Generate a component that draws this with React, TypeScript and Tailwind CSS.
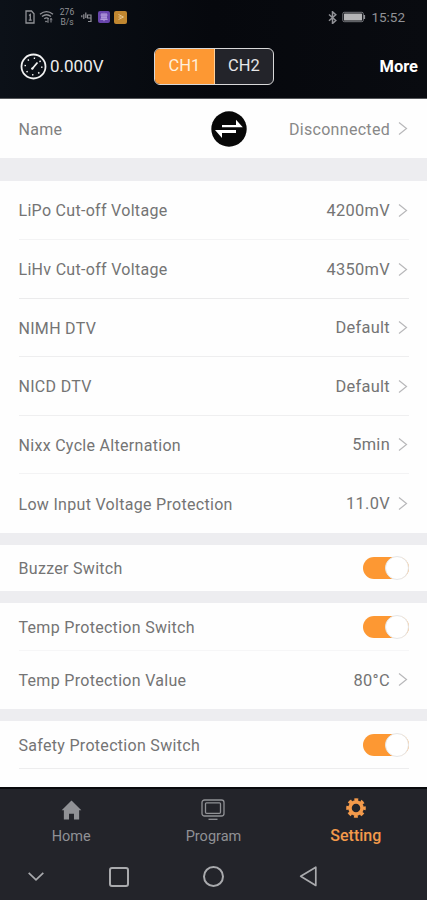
import type { ReactNode } from 'react';
import clsx from 'clsx';

type Setting = {
  label: string;
  value?: string;
  height: string;
  divider?: string;
};

const VOLTAGE_SETTINGS: Setting[] = [
  { label: 'LiPo Cut-off Voltage', value: '4200mV', height: 'h-[59px]', divider: 'bg-[#f3f3f4]' },
  { label: 'LiHv Cut-off Voltage', value: '4350mV', height: 'h-[59px]', divider: 'bg-[#ebebec]' },
  { label: 'NIMH DTV', value: 'Default', height: 'h-[58px]', divider: 'bg-[#eeeeef]' },
  { label: 'NICD DTV', value: 'Default', height: 'h-[59px]', divider: 'bg-[#efeff0]' },
  { label: 'Nixx Cycle Alternation', value: '5min', height: 'h-[58px]', divider: 'bg-[#f3f3f4]' },
  { label: 'Low Input Voltage Protection', value: '11.0V', height: 'h-[59px]' },
];

const BUZZER_SETTINGS: Setting[] = [{ label: 'Buzzer Switch', height: 'h-[46px]' }];

const TEMP_SETTINGS: Setting[] = [
  { label: 'Temp Protection Switch', height: 'h-12', divider: 'bg-[#f6f6f7]' },
  { label: 'Temp Protection Value', value: '80°C', height: 'h-[58px]' },
];

const SAFETY_SETTINGS: Setting[] = [
  { label: 'Safety Protection Switch', height: 'h-12', divider: 'bg-[#ededee]' },
];

function Chevron() {
  return (
    <svg className="mr-px mb-0.5 ml-2 h-[15px] w-2.5 shrink-0" viewBox="0 0 10 15" fill="none" stroke="#b8b8ba" strokeWidth="1.2">
      <path d="M1 1.5 8.5 7.5 1 13.5" />
    </svg>
  );
}

function Toggle() {
  return (
    <div className="relative mb-0.5 h-[22px] w-[46px] rounded-full bg-[#fd9833]">
      <div className="absolute -top-px right-0 size-6 rounded-full border border-[#e6e6e6] bg-white" />
    </div>
  );
}

function SettingRow({ label, value, height, divider }: Setting) {
  return (
    <div className={clsx('flex flex-col pr-[18px] pl-[18.5px]', height)}>
      <div className={clsx('flex flex-1 items-center justify-between', divider ? 'pt-[3px]' : 'pt-0.5')}>
        <span>{label}</span>
        {value ? (
          <span className="flex items-center text-[16.4px]">
            {value}
            <Chevron />
          </span>
        ) : (
          <Toggle />
        )}
      </div>
      {divider && <div className={clsx('h-[1.5px]', divider)} />}
    </div>
  );
}

function Group({ settings, className }: { settings: Setting[]; className?: string }) {
  return (
    <section className={clsx('bg-[#fefefe]', className)}>
      {settings.map((setting) => (
        <SettingRow key={setting.label} {...setting} />
      ))}
    </section>
  );
}

function StatusBar() {
  return (
    <div className="flex h-[34px] items-center justify-between pr-[22px] pl-[25px] text-[#919297]">
      <div className="flex items-center">
        <svg className="h-3.5 w-2.5" viewBox="0 0 10 14" fill="none" stroke="currentColor" strokeWidth="1.3">
          <path d="M1 1h5.5L9 3.8V13H1z M4 5.5l1.3-1V10 M3.7 10.2h3" />
        </svg>
        <svg className="ml-1 h-3.5 w-[15px]" viewBox="0 0 15 14" fill="none" stroke="currentColor" strokeWidth="1.4">
          <path d="M1 4.2Q7.5-1 14 4.2M3 6.5Q7.5 3 12 6.5M5.3 8.8q2.2-1.8 4.4 0M6.5 11l1 1" />
          <path d="M9 8.5v4m-1.3-1.3L9 12.5M12 12.5v-4m-1.2 1.2L12 8.5l1.3 1.2" strokeWidth="1" />
        </svg>
        <div className="ml-[5px] w-4 text-center text-[8.5px] leading-[10.5px]">
          <div>276</div>
          <div>B/s</div>
        </div>
        <svg className="ml-1.5 h-3 w-[11px]" viewBox="0 0 11 12" fill="none" stroke="currentColor" strokeWidth="1.2">
          <path d="M.8 6.2v-2M2.8 8V3.2M4.8 7V1.5M6.5 7.5V4h3.5v6.5H7M7 7h3" />
        </svg>
        <div className="ml-1.5 flex size-3 items-center justify-center rounded-[2px] bg-[#6845ac]">
          <svg className="size-2.5" viewBox="0 0 10 10" fill="none" stroke="#b9a3df">
            <path d="M5 .8v8.4M1.5 3h7M2 5.2h6M1.3 7.3h7.4M3 1v7M7 1v7" />
          </svg>
        </div>
        <div className="ml-1 flex size-[13px] items-center justify-center rounded-[2px] bg-[#c18730]">
          <svg className="size-2" viewBox="0 0 8 8" fill="none" stroke="#e6c48d">
            <path d="M1.5 1.5 6.5 4l-5 2.5M1.5 4h3" />
          </svg>
        </div>
      </div>
      <div className="flex items-center">
        <svg className="h-[13px] w-[9px]" viewBox="0 0 9 13" fill="none" stroke="currentColor" strokeWidth="1.5">
          <path d="m1 3.5 6.8 6-3.3 3V.8l3.3 3L1 9.8" />
        </svg>
        <svg className="mr-[5px] ml-[5px] h-3 w-6" viewBox="0 0 24 12">
          <rect x=".8" y="1.3" width="20.5" height="9.4" rx="1.5" fill="none" stroke="currentColor" strokeWidth=".8" />
          <rect x="2" y="2.4" width="18" height="7.2" rx=".5" fill="#b5b5b7" />
          <path d="M22.3 4v4" stroke="currentColor" strokeWidth="1.6" />
        </svg>
        <span className="text-[13.5px]">15:52</span>
      </div>
    </div>
  );
}

function GaugeIcon() {
  return (
    <svg className="mb-px size-[27px]" viewBox="0 0 27 27" fill="none" stroke="#f1f1f1">
      <circle cx="13.5" cy="13.5" r="12" strokeWidth="1.8" />
      <circle cx="13.5" cy="13.5" r="8.3" strokeWidth="1.5" strokeDasharray="1.4 5.12" />
      <path d="m12 16 5.5-6.5" strokeWidth="1.8" />
      <circle cx="12.3" cy="15.6" r="1.2" fill="#f1f1f1" stroke="none" />
    </svg>
  );
}

function Header() {
  return (
    <header className="h-[99px] border-b border-[#55575a] bg-linear-to-r from-[#0c1118] via-[#06080d] to-[#090b10]">
      <StatusBar />
      <div className="grid h-16 grid-cols-[1fr_120px_1fr] items-center pr-[9px] pl-5">
        <div className="flex items-center gap-[3px] pt-px text-[17px] text-[#ececed]">
          <GaugeIcon />
          0.000V
        </div>
        <div className="-ml-[5px] flex h-[37px] w-[120px] overflow-hidden rounded-md border-[1.5px] border-[#d8d8d9] bg-[#23242a] text-[16.5px] text-[#e6e6e7]">
          <div className="flex w-[60px] items-center justify-center border-r border-[#ffd19b] bg-[#fd9833] pt-px text-[#fff0dc]">
            CH1
          </div>
          <div className="flex flex-1 items-center justify-center pt-px">CH2</div>
        </div>
        <div className="pt-0.5 text-right text-[16.5px] font-bold text-white">More</div>
      </div>
    </header>
  );
}

function TabItem({ icon, label, active }: { icon: ReactNode; label: string; active?: boolean }) {
  return (
    <div
      className={clsx(
        'flex flex-col items-center',
        active ? 'text-[16px] font-medium text-[#f39a4b]' : 'text-[14.5px] text-[#909195]',
      )}
    >
      <div className="flex h-[23px] items-center">{icon}</div>
      <span className={clsx('leading-5', active ? 'mt-1.5' : 'mt-[7px]')}>{label}</span>
    </div>
  );
}

function TabBar() {
  return (
    <nav className="grid h-[66px] grid-cols-3 pt-2">
      <TabItem
        label="Home"
        icon={
          <svg className="mt-[3px] h-5 w-[21px]" viewBox="0 0 22 20" fill="currentColor">
            <path d="m11 0 10.3 10.2H19V20h-5.4v-6.2H8.4V20H3v-9.8H.7z" />
          </svg>
        }
      />
      <TabItem
        label="Program"
        icon={
          <svg className="mt-[3px] h-[22px] w-6" viewBox="0 0 24 22" fill="none" stroke="currentColor" strokeWidth="1.3">
            <rect x="1" y="1" width="22" height="16" rx="2.5" />
            <rect x="4.5" y="3.8" width="15" height="10.5" rx="1" />
            <path d="M7.5 20.3h9" />
          </svg>
        }
      />
      <TabItem
        active
        label="Setting"
        icon={
          <svg className="mb-0.5 size-5" viewBox="0 0 20 20" fill="none" stroke="currentColor">
            <circle cx="10" cy="10" r="6" strokeWidth="3.5" />
            <circle cx="10" cy="10" r="8.4" strokeWidth="2.8" strokeDasharray="3.8 2.797" strokeDashoffset="1.9" />
          </svg>
        }
      />
    </nav>
  );
}

function SystemBar() {
  return (
    <div className="flex flex-1 items-center pb-0.5 pl-[27px] text-[#a9aaad]">
      <svg className="h-[11px] w-[18px]" viewBox="0 0 18 11" fill="none" stroke="currentColor" strokeWidth="1.7">
        <path d="m1.7 1.8 7.3 7 7.3-7" />
      </svg>
      <div className="ml-16 size-5 rounded-[3px] border-2 border-current" />
      <div className="ml-[74px] size-[21px] rounded-full border-2 border-current" />
      <svg className="ml-[75px] h-[21px] w-[18px]" viewBox="0 0 18 21" fill="none" stroke="currentColor" strokeWidth="1.7">
        <path d="M16.8 1.2v18.2L1.7 10.3z" strokeLinejoin="round" />
      </svg>
    </div>
  );
}

export default function App() {
  return (
    <div className="flex h-[900px] w-[427px] flex-col overflow-hidden bg-[#ededf0] font-['Roboto',sans-serif] text-[16px] tracking-[0.3px] text-[#747474]">
      <div className="tracking-normal">
        <Header />
      </div>

      <section className="grid h-[59px] grid-cols-[1fr_36px_1fr] items-center bg-[#fefefe] pr-[18px] pl-[18.5px]">
        <span className="pt-0.5 text-[#808080]">Name</span>
        <svg className="ml-[15px] size-9" viewBox="0 0 36 36">
          <circle cx="18" cy="18" r="17.7" fill="#080808" />
          <path d="M11 14h14V8.8l6.8 7.5H11z" fill="#fff" />
          <path d="M25 19H4l7 8v-5h14z" fill="#fff" />
        </svg>
        <span className="flex items-center justify-end pt-0.5 text-[#888888]">
          Disconnected
          <Chevron />
        </span>
      </section>

      <Group settings={VOLTAGE_SETTINGS} className="mt-[23px]" />
      <Group settings={BUZZER_SETTINGS} className="mt-3" />
      <Group settings={TEMP_SETTINGS} className="mt-3" />
      <Group settings={SAFETY_SETTINGS} className="mt-3 h-[66px]" />

      <footer className="flex flex-1 flex-col border-t-2 border-[#090a0d] bg-[#23242a] tracking-normal">
        <TabBar />
        <SystemBar />
      </footer>
    </div>
  );
}
